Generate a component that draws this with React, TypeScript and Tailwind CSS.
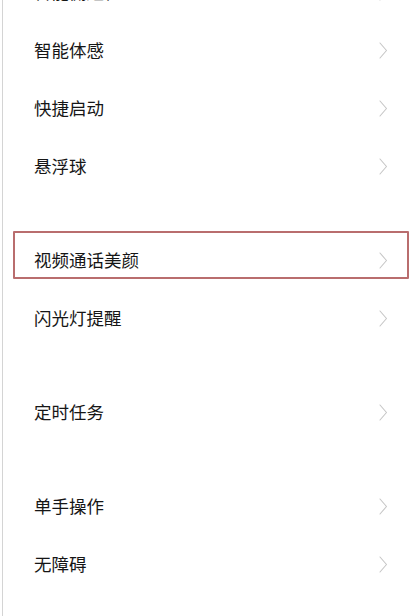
import { Fragment } from "react";

const groups: string[][] = [
  ["智能侧边栏", "智能体感", "快捷启动", "悬浮球"],
  ["视频通话美颜", "闪光灯提醒"],
  ["定时任务"],
  ["单手操作", "无障碍"],
];

function Chevron() {
  return (
    <svg width="9" height="17" viewBox="0 0 9 17" fill="none" className="shrink-0">
      <path d="M1 1L7.5 8.5L1 16" stroke="#c6c6c6" strokeWidth="1.1" strokeLinecap="round" strokeLinejoin="round" />
    </svg>
  );
}

function Row({ label, highlight }: { label: string; highlight?: boolean }) {
  return (
    <div className="relative flex h-[58px] items-center justify-between pl-[34px] pr-[32px]">
      {highlight && (
        <div className="absolute left-[13px] right-[11px] top-0 h-[48px] border-2 border-[#a8494a]/80 rounded-[1px]" />
      )}
      <span className="text-[17.5px] leading-none text-[#161616]">{label}</span>
      <Chevron />
    </div>
  );
}

export default function App() {
  return (
    <div
      className="relative h-[616px] w-[420px] overflow-hidden bg-white"
      style={{ fontFamily: '"Noto Sans CJK SC", "Noto Sans", sans-serif' }}
    >
      <div className="absolute left-[2px] top-0 h-full w-px bg-[#d4d4d4]" />
      <div className="mt-[-37px] flex flex-col">
        {groups.map((items, gi) => (
          <Fragment key={gi}>
            {gi > 0 && <div className="h-[36px]" />}
            {items.map((label) => (
              <Row key={label} label={label} highlight={label === "视频通话美颜"} />
            ))}
          </Fragment>
        ))}
      </div>
    </div>
  );
}
